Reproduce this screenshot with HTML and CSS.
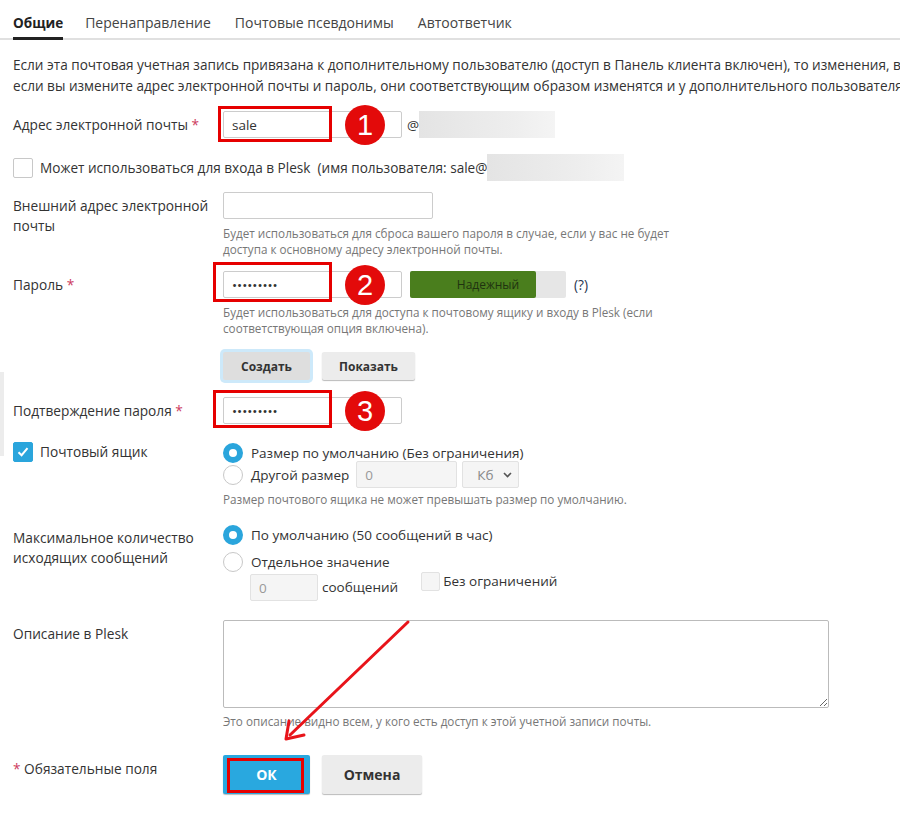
FILE: index.html
```html
<!DOCTYPE html>
<html lang="ru">
<head>
    <meta charset="UTF-8">
    <title>Почтовый ящик</title>
    <link rel="stylesheet" href="styles.css">
</head>
<body>

    <div class="page">
        <!-- Вкладки -->
        <div class="tabs">
            <span class="tab active">Общие</span>
            <span class="tab">Перенаправление</span>
            <span class="tab">Почтовые псевдонимы</span>
            <span class="tab">Автоответчик</span>
        </div>

        <p class="intro">
            <span>Если эта почтовая учетная запись привязана к дополнительному пользователю (доступ в Панель клиента включен), то изменения, внесенные в эту учетную запись, будут</span>
            <span>если вы измените адрес электронной почты и пароль, они соответствующим образом изменятся и у дополнительного пользователя.</span>
        </p>

        <div class="form">
            <div class="row row-email">
                <div class="label">Адрес электронной почты <span class="req">*</span></div>
                <div class="field inline">
                    <div class="mark-wrap">
                        <input class="input w179" type="text" value="sale">
                        <span class="mark mark-email"></span>
                        <span class="num">1</span>
                    </div>
                    <span class="at">@</span>
                    <span class="blur blur-domain"></span>
                </div>
            </div>

            <div class="row-login">
                <span class="check"></span>
                <span class="login-text">Может использоваться для входа в Plesk&nbsp; (имя пользователя: sale@</span>
                <span class="blur blur-login"></span>
            </div>

            <div class="row row-external">
                <div class="label label-top">Внешний адрес электронной<br>почты</div>
                <div class="field">
                    <input class="input w210" type="text">
                    <p class="hint">Будет использоваться для сброса вашего пароля в случае, если у вас не будет<br>доступа к основному адресу электронной почты.</p>
                </div>
            </div>

            <div class="row row-password">
                <div class="label label-top">Пароль <span class="req">*</span></div>
                <div class="field">
                    <div class="inline">
                        <div class="mark-wrap">
                            <input class="input w179" type="password" value="123456789">
                            <span class="mark mark-pass"></span>
                            <span class="num">2</span>
                        </div>
                        <div class="strength">
                            <div class="strength-fill" style="width: 81%"></div>
                            <span class="strength-text">Надежный</span>
                        </div>
                        <span class="help">(?)</span>
                    </div>
                    <p class="hint">Будет использоваться для доступа к почтовому ящику и входу в Plesk (если<br>соответствующая опция включена).</p>
                    <div class="pass-buttons">
                        <button class="btn btn-focus" type="button">Создать</button>
                        <button class="btn btn-show" type="button">Показать</button>
                    </div>
                </div>
            </div>

            <div class="row row-confirm">
                <div class="label">Подтверждение пароля <span class="req">*</span></div>
                <div class="field">
                    <div class="mark-wrap">
                        <input class="input w179" type="password" value="123456789">
                        <span class="mark mark-confirm"></span>
                        <span class="num">3</span>
                    </div>
                </div>
            </div>

            <div class="row row-mailbox">
                <div class="label label-check">
                    <span class="check checked">
                        <svg width="14" height="14" viewBox="0 0 14 14"><path d="M2.5 7.2 L5.6 10.2 L11.5 3.2" fill="none" stroke="#fff" stroke-width="2"/></svg>
                    </span>
                    Почтовый ящик
                </div>
                <div class="field">
                    <div class="option"><span class="radio on"></span>Размер по умолчанию (Без ограничения)</div>
                    <div class="option opt-size">
                        <span class="radio"></span>Другой размер
                        <input class="input disabled w101" type="text" value="0">
                        <div class="select">Кб
                            <svg width="9" height="6" viewBox="0 0 9 6"><path d="M1 1 L4.5 4.5 L8 1" fill="none" stroke="#555" stroke-width="1.6"/></svg>
                        </div>
                    </div>
                    <p class="hint hint-size">Размер почтового ящика не может превышать размер по умолчанию.</p>
                </div>
            </div>

            <div class="row row-outgoing">
                <div class="label label-top">Максимальное количество<br>исходящих сообщений</div>
                <div class="field">
                    <div class="option"><span class="radio on"></span>По умолчанию (50 сообщений в час)</div>
                    <div class="option"><span class="radio"></span>Отдельное значение</div>
                    <div class="count">
                        <input class="input disabled w68" type="text" value="0">
                        <span class="count-unit">сообщений</span>
                        <span class="check small"></span>
                        <span class="count-unlimited">Без ограничений</span>
                    </div>
                </div>
            </div>

            <div class="row row-desc">
                <div class="label label-top">Описание в Plesk</div>
                <div class="field">
                    <textarea class="textarea"></textarea>
                    <p class="hint hint-desc">Это описание видно всем, у кого есть доступ к этой учетной записи почты.</p>
                </div>
            </div>

            <div class="row row-submit">
                <div class="label label-top"><span class="req">*</span> Обязательные поля</div>
                <div class="field inline">
                    <div class="mark-wrap">
                        <button class="btn btn-ok" type="button">ОК</button>
                        <span class="mark mark-ok"></span>
                    </div>
                    <button class="btn btn-cancel" type="button">Отмена</button>
                </div>
            </div>
        </div>

        <!-- край боковой панели -->
        <div class="edge"></div>

        <!-- стрелка к кнопке ОК -->
        <svg class="arrow" width="900" height="818" viewBox="0 0 900 818">
            <line x1="408" y1="622" x2="290" y2="735" stroke="#e8141a" stroke-width="3" stroke-linecap="round"/>
            <path d="M286 739 L289 721 M286 739 L304 735" fill="none" stroke="#e8141a" stroke-width="3" stroke-linecap="round"/>
        </svg>
    </div>

</body>
</html>
```

FILE: styles.css
```css
* {
    box-sizing: border-box;
}
body {
    margin: 0;
    font-family: "Open Sans", sans-serif;
    font-size: 13.7px;
    color: #333;
    background: #fff;
    overflow: hidden;
}
.page {
    position: relative;
    width: 900px;
    height: 818px;
    padding-left: 13px;
}

/* Вкладки */
.tabs {
    display: flex;
    gap: 24px;
    height: 40px;
    border-bottom: 2px solid #e0e0e0;
    margin-left: -13px;
    padding-left: 13px;
    padding-top: 13px;
    width: 920px;
}
.tab {
    font-size: 14px;
    line-height: 20px;
    color: #444;
    height: 27px;
}
.tab.active {
    font-weight: bold;
    font-size: 13.5px;
    color: #222;
    border-bottom: 3px solid #222;
    margin-right: -2px;
}

.intro {
    margin: 14px 0 0;
    line-height: 21px;
    font-size: 13.6px;
    white-space: nowrap;
}
.intro span {
    display: block;
}

/* Форма */
.row {
    display: grid;
    grid-template-columns: 210px auto;
}
.label {
    line-height: 20px;
}
.label-top {
    padding-top: 4px;
}
.req {
    color: #cd3b60;
}
.inline {
    display: flex;
    align-items: center;
}
.input {
    height: 27px;
    border: 1px solid #ccc;
    border-radius: 2px;
    font-family: "Open Sans", sans-serif;
    font-size: 13.5px;
    padding: 0 8px;
    color: #333;
    background: #fff;
    outline: none;
}
.input.disabled {
    background: #f5f5f5;
    border-color: #e2e2e2;
    color: #999;
}
.w179 { width: 179px; }
.w210 { width: 210px; }
.w101 { width: 101px; }
.w68 { width: 68px; }

.hint {
    margin: 0;
    font-size: 11.7px;
    line-height: 16px;
    color: #777;
    white-space: nowrap;
}

.row-email {
    margin-top: 15px;
    align-items: center;
}
.at {
    margin-left: 5px;
    font-size: 13.5px;
}
.blur {
    display: inline-block;
    height: 27px;
    background: linear-gradient(90deg, #e4e4e4, #eeeeee 70%, #f4f4f4);
}
.blur-domain {
    width: 136px;
    margin-left: 0;
}

.row-login {
    display: flex;
    align-items: center;
    margin-top: 16px;
    height: 27px;
}
.check {
    display: inline-flex;
    align-items: center;
    justify-content: center;
    width: 20px;
    height: 20px;
    border: 1px solid #c8c8c8;
    border-radius: 2px;
    background: #fff;
    flex-shrink: 0;
}
.check.checked {
    background: #2aa5dc;
    border-color: #2aa5dc;
}
.check.small {
    width: 19px;
    height: 19px;
    border-color: #e2e2e2;
    background: #f5f5f5;
}
.login-text {
    margin-left: 7px;
    font-size: 13.6px;
}
.blur-login {
    width: 137px;
}

.row-external {
    margin-top: 11px;
}
.row-external .hint {
    margin-top: 6px;
}

.row-password {
    margin-top: 14px;
}
.strength {
    position: relative;
    width: 156px;
    height: 27px;
    margin-left: 8px;
    background: #e6e6e6;
    border-radius: 2px;
}
.strength-fill {
    height: 100%;
    background: #4a7e1d;
    border-radius: 2px;
}
.strength-text {
    position: absolute;
    left: 0;
    right: 0;
    top: 0;
    line-height: 27px;
    text-align: center;
    font-size: 12px;
    color: #1f3310;
}
.help {
    margin-left: 8px;
    color: #253450;
}
.row-password .hint {
    margin-top: 6px;
}
.pass-buttons {
    display: flex;
    gap: 12px;
    margin-top: 16px;
}
.btn {
    height: 28px;
    border: none;
    border-radius: 2px;
    font-family: "Open Sans", sans-serif;
    font-size: 12px;
    font-weight: bold;
    color: #333;
    background: #ececec;
    box-shadow: 0 1px 1px #bbb;
    cursor: pointer;
}
.btn-focus {
    width: 87px;
    background: #dedede;
    box-shadow: 0 0 0 3px #cde9fa;
}
.btn-show {
    width: 93px;
}

.row-confirm {
    margin-top: 17px;
    align-items: center;
}

.row-mailbox {
    margin-top: 18px;
}
.label-check {
    display: flex;
    align-items: center;
    gap: 7px;
    height: 20px;
}
.option {
    display: flex;
    align-items: center;
    height: 22px;
    font-size: 13.5px;
}
.radio {
    width: 20px;
    height: 20px;
    border-radius: 50%;
    border: 1px solid #c8c8c8;
    background: #fff;
    margin-right: 8px;
    flex-shrink: 0;
}
.radio.on {
    border: 6px solid #2aa5dc;
}
.opt-size {
    height: 27px;
    margin-top: -3px;
}
.opt-size .input {
    margin-left: 7px;
}
.select {
    display: flex;
    align-items: center;
    justify-content: space-between;
    width: 57px;
    height: 27px;
    margin-left: 5px;
    padding: 0 6px 0 14px;
    border: 1px solid #e2e2e2;
    border-radius: 2px;
    background: #f5f5f5;
    color: #888;
    font-size: 13.5px;
}
.hint-size {
    margin-top: 3px;
}

.row-outgoing {
    margin-top: 17px;
}
.row-outgoing .option + .option {
    margin-top: 5px;
}
.count {
    display: flex;
    align-items: flex-start;
    margin-top: 1px;
    margin-left: 27px;
    height: 27px;
}
.count-unit {
    margin-left: 4px;
    line-height: 27px;
    font-size: 13.5px;
}
.count .check {
    margin-left: 23px;
    margin-top: -2px;
}
.count-unlimited {
    margin-left: 3px;
    margin-top: -2px;
    line-height: 19px;
    font-size: 13.5px;
}

.row-desc {
    margin-top: 19px;
}
.textarea {
    display: block;
    width: 606px;
    height: 88px;
    border: 1px solid #bbb;
    border-radius: 2px;
    resize: both;
}
.hint-desc {
    margin-top: 5px;
}

.row-submit {
    margin-top: 26px;
}
.btn-ok {
    width: 87px;
    height: 39px;
    background: #29a8df;
    color: #fff;
    font-size: 14px;
}
.btn-cancel {
    width: 100px;
    height: 39px;
    margin-left: 12px;
    font-size: 14px;
}

/* Пометки */
.mark-wrap {
    position: relative;
    display: inline-flex;
}
.mark {
    position: absolute;
    border: 3px solid #e60000;
}
.mark-email {
    left: -5px;
    top: -5px;
    width: 114px;
    height: 36px;
}
.mark-pass {
    left: -10px;
    top: -9px;
    width: 119px;
    height: 40px;
}
.mark-confirm {
    left: -10px;
    top: -7px;
    width: 119px;
    height: 38px;
}
.mark-ok {
    left: 4px;
    top: 3px;
    width: 77px;
    height: 35px;
}
.num {
    position: absolute;
    left: 122px;
    top: 50%;
    width: 40px;
    height: 40px;
    margin-top: -20px;
    border-radius: 50%;
    background: #e30a0a;
    color: #fff;
    font-family: "Liberation Sans", Arial, sans-serif;
    font-size: 29px;
    line-height: 40px;
    text-align: center;
}

.edge {
    position: absolute;
    left: 0;
    top: 372px;
    width: 4px;
    height: 84px;
    background: #ececec;
}
.arrow {
    position: absolute;
    left: 0;
    top: 0;
    pointer-events: none;
}
```
